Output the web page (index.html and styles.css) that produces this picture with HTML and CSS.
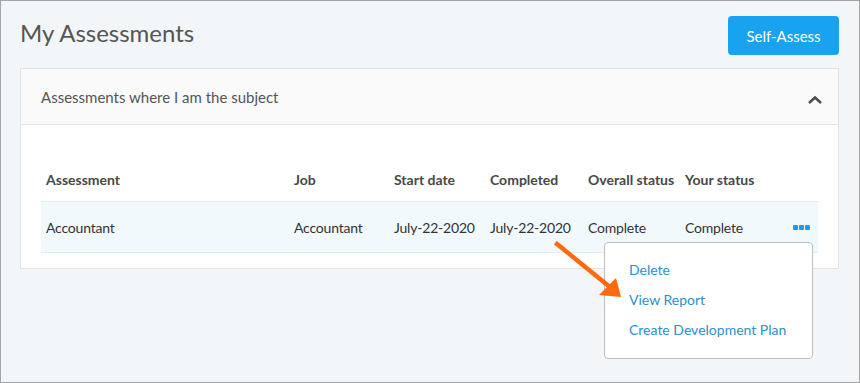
FILE: index.html
```html
<!DOCTYPE html>
<html lang="en">
<head>
  <meta charset="UTF-8" />
  <title>My Assessments</title>
  <link rel="stylesheet" href="styles.css">
</head>
<body>
  <div class="page">
    <div class="page-head">
      <h1 class="page-title">My Assessments</h1>
      <button class="btn-primary">Self-Assess</button>
    </div>

    <div class="panel">
      <div class="panel-head">
        <span>Assessments where I am the subject</span>
        <svg class="chevron" width="16" height="10" viewBox="0 0 16 10">
          <path d="M2 8 L8 2.5 L14 8" fill="none" stroke="#4d4d4d" stroke-width="2.6" />
        </svg>
      </div>
      <div class="panel-body">
        <table class="grid">
          <colgroup>
            <col style="width:248px">
            <col style="width:100px">
            <col style="width:96px">
            <col style="width:98px">
            <col style="width:97px">
            <col style="width:108px">
            <col>
          </colgroup>
          <thead>
            <tr>
              <th>Assessment</th>
              <th>Job</th>
              <th>Start date</th>
              <th>Completed</th>
              <th>Overall status</th>
              <th>Your status</th>
              <th></th>
            </tr>
          </thead>
          <tbody>
            <tr>
              <td>Accountant</td>
              <td>Accountant</td>
              <td>July-22-2020</td>
              <td>July-22-2020</td>
              <td>Complete</td>
              <td>Complete</td>
              <td class="more"><span></span><span></span><span></span></td>
            </tr>
          </tbody>
        </table>
      </div>
    </div>

    <!-- Aktionsmenü -->
    <div class="menu">
      <a href="#">Delete</a>
      <a href="#">View Report</a>
      <a href="#">Create Development Plan</a>
    </div>

    <svg class="pointer" width="80" height="70" viewBox="0 0 80 70">
      <line x1="3" y1="3" x2="56" y2="46" stroke="#ff6a10" stroke-width="4.5" stroke-linecap="square" />
      <polygon points="67,56 45,54 62,37" fill="#ff6a10" />
    </svg>
  </div>
</body>
</html>
```

FILE: styles.css
```css
* {
  box-sizing: border-box;
}
body {
  margin: 0;
  font-family: 'Lato', 'Open Sans', sans-serif;
  color: #333;
}
.page {
  position: relative;
  width: 860px;
  height: 383px;
  border: 1px solid #a4a4a4;
  background: #f3f6f9;
  padding: 15px 20px 0 19px;
}
.page-head {
  display: flex;
  justify-content: space-between;
  align-items: flex-start;
  height: 52px;
}
.page-title {
  margin: 0;
  padding-top: 2px;
  font-size: 24px;
  font-weight: 400;
  color: #555;
}
.btn-primary {
  width: 111px;
  height: 39px;
  border: none;
  border-radius: 4px;
  background: #17a3f0;
  color: #fff;
  font-family: inherit;
  font-size: 15px;
  cursor: pointer;
}
.panel {
  border: 1px solid #e1e3e5;
  background: #fff;
}
.panel-head {
  display: flex;
  justify-content: space-between;
  align-items: center;
  height: 56px;
  padding: 0 15px 0 20px;
  background: #fafafa;
  border-bottom: 1px solid #e4e4e4;
  font-size: 15px;
  color: #555;
}
.chevron {
  margin-top: 6px;
}
.panel-body {
  padding: 20px 20px 15px 20px;
}
.grid {
  width: 100%;
  table-layout: fixed;
  border-collapse: collapse;
  font-size: 14px;
}
.grid th {
  text-align: left;
  font-weight: 700;
  color: #484848;
  padding: 26px 0 13px 5px;
  white-space: nowrap;
}
.grid td {
  height: 51px;
  padding: 0 0 0 5px;
  background: #f1f9fd;
  border-top: 1px solid #e3ecf1;
  border-bottom: 1px solid #e3ecf1;
  color: #333;
  letter-spacing: -0.2px;
  white-space: nowrap;
}
.more {
  font-size: 0;
}
.more span {
  display: inline-block;
  width: 5px;
  height: 5px;
  margin-right: 1px;
  border-radius: 1px;
  background: #1a9af0;
}
.menu {
  position: absolute;
  left: 603px;
  top: 241px;
  width: 209px;
  padding: 12px 0 13px 24px;
  background: #fff;
  border: 1px solid #bdbdbd;
  border-radius: 4px;
  display: flex;
  flex-direction: column;
}
.menu a {
  line-height: 30px;
  font-size: 14px;
  color: #2b8fcd;
  text-decoration: none;
}
.pointer {
  position: absolute;
  left: 553px;
  top: 240px;
}
```
